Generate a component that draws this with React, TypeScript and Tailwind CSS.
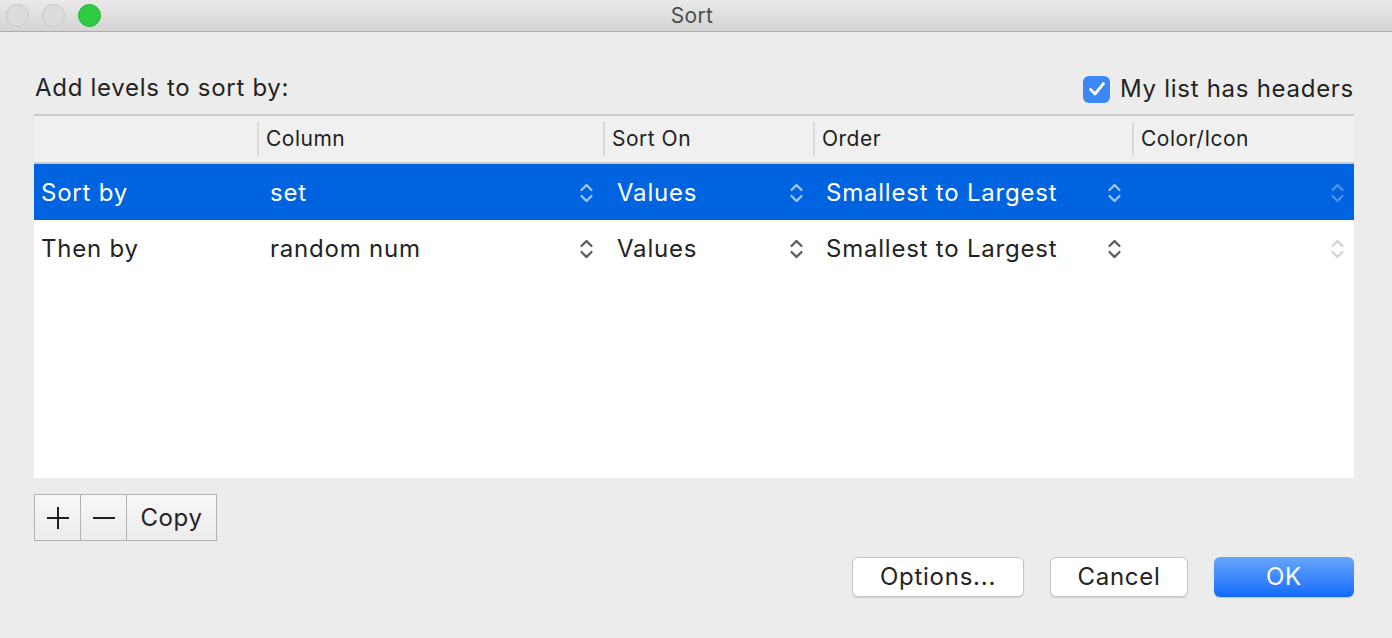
const columns = [
  { label: '', width: 'w-[223px]' },
  { label: 'Column', width: 'w-[346px]' },
  { label: 'Sort On', width: 'w-[210px]' },
  { label: 'Order', width: 'w-[319px]' },
  { label: 'Color/Icon', width: 'flex-1' },
];

const rows = [
  { level: 'Sort by', column: 'set', sortOn: 'Values', order: 'Smallest to Largest', selected: true },
  { level: 'Then by', column: 'random num', sortOn: 'Values', order: 'Smallest to Largest', selected: false },
];

// up/down stepper chevrons used by the popup cells
const Stepper = ({ className }: { className: string }) => (
  <svg width="15" height="20" viewBox="0 0 15 20" fill="none" className={className}>
    <path d="M2.5 7L7.5 2L12.5 7" stroke="currentColor" strokeWidth="2.2" strokeLinecap="round" strokeLinejoin="round" />
    <path d="M2.5 13L7.5 18L12.5 13" stroke="currentColor" strokeWidth="2.2" strokeLinecap="round" strokeLinejoin="round" />
  </svg>
);

const TrafficLight = ({ color }: { color: string }) => (
  <div className={`w-[23px] h-[23px] rounded-full border ${color}`} />
);

export default function App() {
  return (
    <div
      className="w-[1392px] h-[638px] bg-[#ececec] flex flex-col overflow-hidden text-[#232323]"
      style={{ fontFamily: 'Inter, "Liberation Sans", sans-serif' }}
    >
      {/* title bar */}
      <div className="relative h-[32px] shrink-0 bg-gradient-to-b from-[#e9e9e9] to-[#d4d4d4] border-b border-[#acacac] flex items-center">
        <div className="flex items-center gap-[13px] pl-[6px]">
          <TrafficLight color="bg-[#dcdcdc] border-[#c6c6c6]" />
          <TrafficLight color="bg-[#dcdcdc] border-[#c6c6c6]" />
          <TrafficLight color="bg-[#2ecc40] border-[#25b434]" />
        </div>
        <div className="absolute inset-0 pr-[8px] flex items-center justify-center text-[21px] tracking-[0.3px] text-[#4d4d4d]">Sort</div>
      </div>

      <div className="flex flex-col pl-[34px] pr-[38px]">
        <div className="h-[82px] flex items-end justify-between pb-[7px]">
          <span className="pl-[1px] pb-[1px] text-[24px] tracking-[0.7px]">Add levels to sort by:</span>
          <label className="flex items-center gap-[10px] pl-[2px]">
            <span className="w-[27px] h-[27px] rounded-[6px] bg-[#3b87f6] flex items-center justify-center">
              <svg width="18" height="16" viewBox="0 0 18 16" fill="none">
                <path d="M2.5 8.5L7 13L15.5 2.5" stroke="white" strokeWidth="2.8" strokeLinecap="round" strokeLinejoin="round" />
              </svg>
            </span>
            <span className="text-[24px] tracking-[0.72px]">My list has headers</span>
          </label>
        </div>

        {/* table */}
        <div className="h-[364px] bg-white flex flex-col border-t-2 border-[#cbcbcb]">
          <div className="h-[48px] bg-[#f0f0f0] border-b-2 border-[#cbcbcb] flex">
            {columns.map((col, i) => (
              <div key={i} className={`${col.width} flex items-center`}>
                {i > 0 && <div className="w-[2px] h-[34px] bg-[#d9d9d9]" />}
                <span className="pl-[7px] text-[21px] tracking-[0.5px] text-[#222]">{col.label}</span>
              </div>
            ))}
          </div>
          {rows.map((row, i) => {
            const text = row.selected ? 'text-white' : 'text-[#232323]';
            const chev = row.selected ? 'text-[#a6c6f5]' : 'text-[#5a5a5a]';
            const chevFaint = row.selected ? 'text-[#5393ee]' : 'text-[#d3d3d3]';
            return (
              <div key={i} className={`h-[56px] pt-[2px] flex items-center text-[24px] tracking-[0.78px] ${text} ${row.selected ? 'bg-[#0064e1]' : ''}`}>
                <div className="w-[223px] pl-[7px]">{row.level}</div>
                <div className="w-[346px] flex items-center justify-between pl-[13px] pr-[9px]">
                  <span>{row.column}</span>
                  <Stepper className={chev} />
                </div>
                <div className="w-[210px] flex items-center justify-between pl-[14px] pr-[9px]">
                  <span>{row.sortOn}</span>
                  <Stepper className={chev} />
                </div>
                <div className="w-[319px] flex items-center justify-between pl-[13px] pr-[10px]">
                  <span>{row.order}</span>
                  <Stepper className={chev} />
                </div>
                <div className="flex-1 flex items-center justify-end pr-[9px]">
                  <Stepper className={chevFaint} />
                </div>
              </div>
            );
          })}
        </div>

        {/* add / remove / copy */}
        <div className="mt-[16px] flex">
          <div className="h-[47px] flex border border-[#b2b2b2] bg-gradient-to-b from-[#f7f7f7] to-[#ececec]">
            <div className="w-[46px] flex items-center justify-center border-r border-[#b2b2b2]">
              <svg width="24" height="24" viewBox="0 0 24 24">
                <path d="M12 1V23M1 12H23" stroke="#1e1e1e" strokeWidth="2" />
              </svg>
            </div>
            <div className="w-[46px] flex items-center justify-center border-r border-[#b2b2b2]">
              <svg width="24" height="24" viewBox="0 0 24 24">
                <path d="M1 12H23" stroke="#1e1e1e" strokeWidth="2" />
              </svg>
            </div>
            <div className="w-[89px] flex items-center justify-center text-[24px] tracking-[0.6px]">Copy</div>
          </div>
        </div>

        {/* dialog buttons */}
        <div className="mt-[16px] flex justify-end gap-[26px] text-[24px] tracking-[0.75px]">
          <button className="w-[172px] h-[40px] bg-white rounded-[6px] border border-[#c6c6c6] shadow-[0_1px_1px_rgba(0,0,0,0.12)]">
            Options...
          </button>
          <button className="w-[138px] h-[40px] bg-white rounded-[6px] border border-[#c6c6c6] shadow-[0_1px_1px_rgba(0,0,0,0.12)]">
            Cancel
          </button>
          <button className="w-[140px] h-[40px] rounded-[6px] bg-gradient-to-b from-[#68a5fa] to-[#0a69fb] text-white shadow-[0_1px_1px_rgba(0,0,0,0.15)]">
            OK
          </button>
        </div>
      </div>
    </div>
  );
}
